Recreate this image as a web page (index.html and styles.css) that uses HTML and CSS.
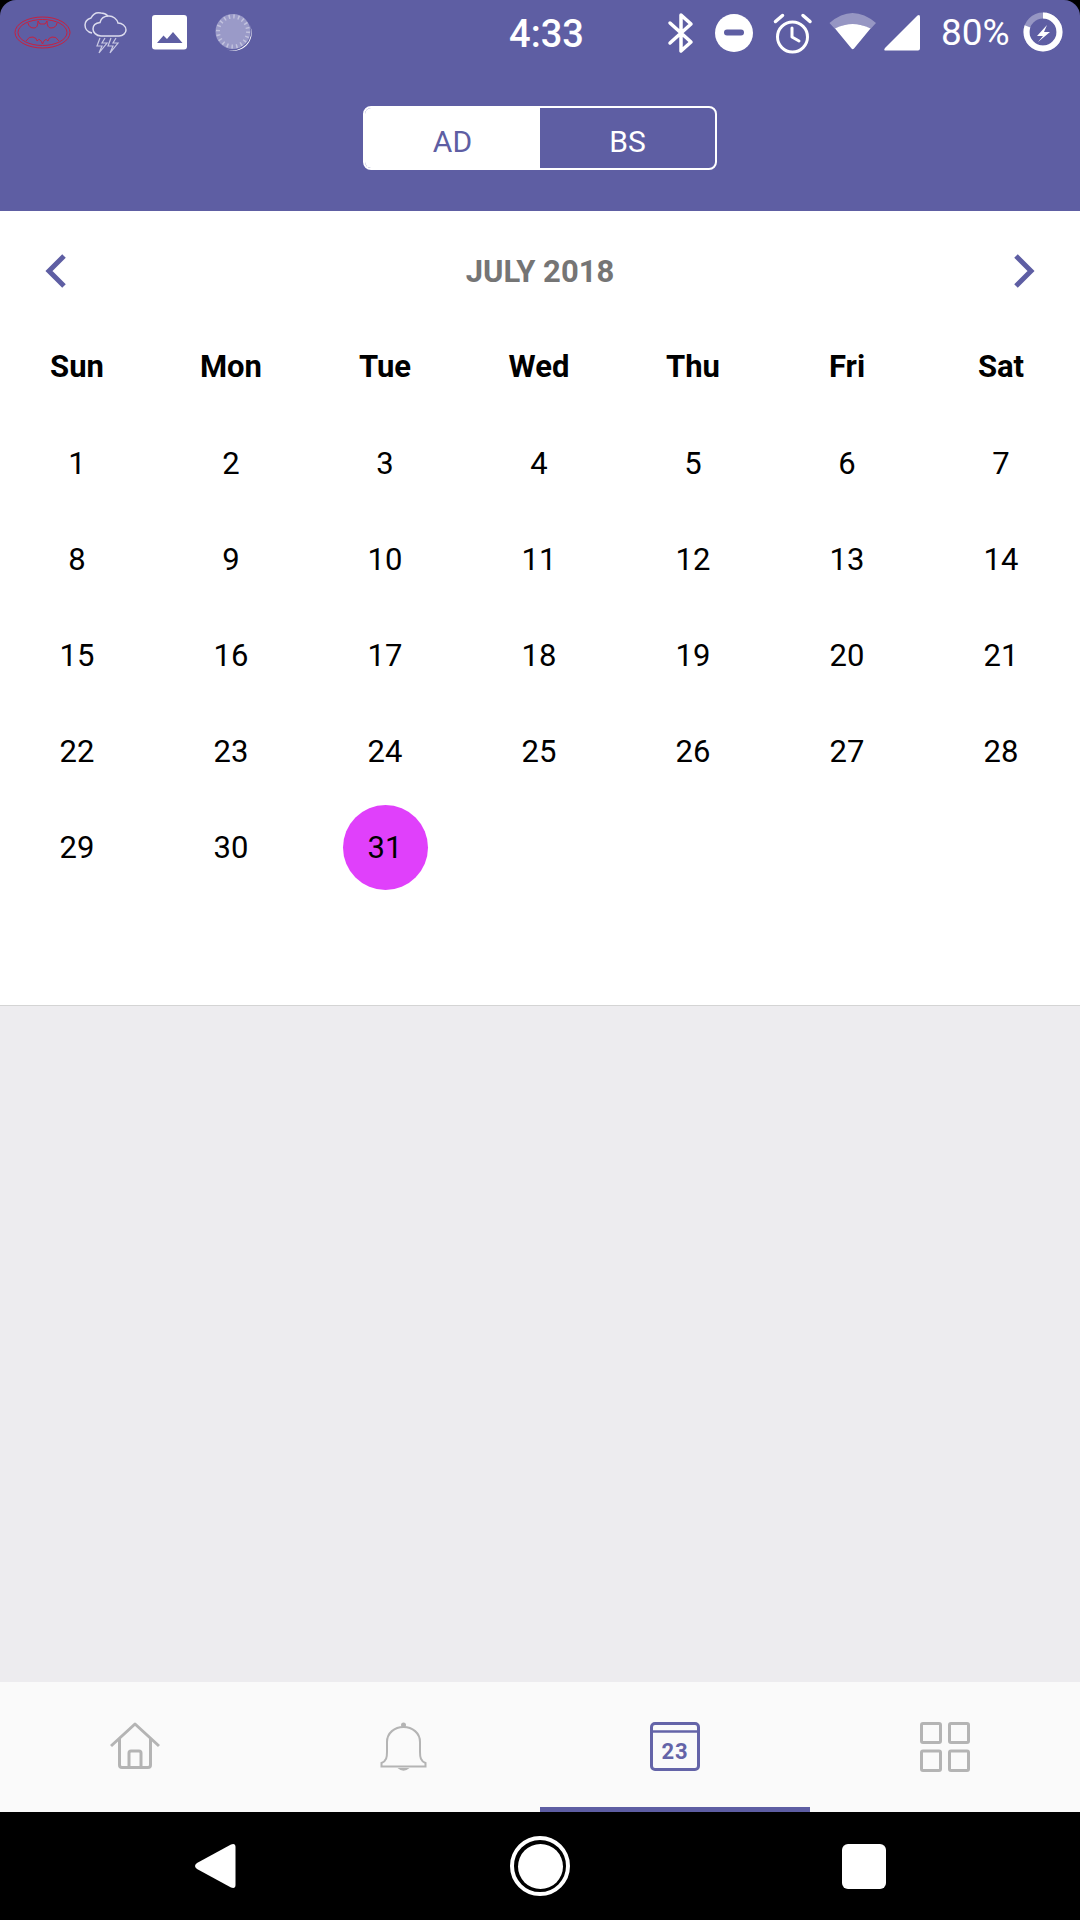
FILE: index.html
```html
<!DOCTYPE html>
<html lang="en">
<head>
    <meta charset="UTF-8">
    <title>Calendar</title>
    <link rel="stylesheet" href="styles.css">
</head>
<body>
<div class="app">
    <div class="header">
        <div class="status">
            <div class="status-left">
                <!-- viewBox values are page pixels, so the icons sit edge to edge -->
                <svg width="64" height="65" viewBox="13 0 64 65" fill="none" stroke="#c8203f" stroke-width="1">
                    <ellipse cx="42.5" cy="32.5" rx="27.5" ry="15.5"/>
                    <ellipse cx="42.5" cy="32.5" rx="24.5" ry="13"/>
                    <path d="M28 23 Q29 28 34 28 Q38 28 38 21 L40 24 H45 L47 21 Q47 28 51 28 Q56 28 57 23"/>
                    <path d="M26 41 Q29 36 33 37 Q37 38 37 41 Q40 37 42.5 44 Q45 37 48 41 Q48 38 52 37 Q56 36 59 41"/>
                </svg>
                <svg width="63" height="65" viewBox="77 0 63 65" fill="none" stroke="#dcdcee" stroke-width="1.5">
                    <path d="M101 36 C96 36 93 32 93 29 C93 25 96 23 100 22.5 C101 18 105 16 109 16 C113 16 117 19 118 23 C122 23 126 26 126 30 C126 33 123 36 119 36 Z"/>
                    <path d="M92 33 C87 32 85 28 85 25 C85 21 88 19 91 18 C93 14 97 12 101 13 C104 13 107 15 108 16"/>
                    <path d="M100 38 L97 46 H102 L99 53 L107 43 H102 L105 38" stroke="#c9c9e4" stroke-width="1.2"/>
                    <path d="M111 38 L108 46 H113 L110 53 L118 43 H113 L116 38" stroke="#c9c9e4" stroke-width="1.2"/>
                </svg>
                <svg width="60" height="65" viewBox="140 0 60 65">
                    <rect x="152" y="15" width="35" height="34.5" rx="3" fill="#fff"/>
                    <path d="M157 43 L163.5 35.5 L167 39 L173 32 L182.5 43 Z" fill="#5e5ea3"/>
                </svg>
                <svg width="68" height="65" viewBox="200 0 68 65">
                    <circle cx="233" cy="31.5" r="17.5" fill="#9a9ac8"/>
                    <circle cx="233" cy="31.5" r="15" fill="none" stroke="#c2c2de" stroke-width="4" stroke-dasharray="1.5 3.2"/>
                    <path d="M250 25 A18.5 18.5 0 0 1 226 49 A18 18 0 0 0 250 25 Z" fill="#fff"/>
                </svg>
            </div>
            <div class="time">4:33</div>
            <div class="status-right">
                <svg width="44" height="65" viewBox="660 0 44 65" fill="none" stroke="#fff" stroke-width="3.5" stroke-linecap="round" stroke-linejoin="round">
                    <path d="M670 23 L691 42 L681 51 V15 L691 24 L670 43"/>
                </svg>
                <svg width="59" height="65" viewBox="704 0 59 65">
                    <circle cx="734" cy="33" r="19" fill="#fff"/>
                    <rect x="724" y="29.5" width="20" height="6" rx="3" fill="#5e5ea3"/>
                </svg>
                <svg width="58" height="65" viewBox="763 0 58 65" fill="none" stroke="#fff" stroke-width="3" stroke-linecap="round" stroke-linejoin="round">
                    <circle cx="792.5" cy="37" r="15"/>
                    <path d="M792 28 V37 L799 41"/>
                    <path d="M775.5 21.5 L782.5 15.5 M803 15.5 L810 21.5" stroke-width="3.5"/>
                </svg>
                <svg width="59" height="65" viewBox="821 0 59 65">
                    <path d="M829.5 23 Q852.5 3 876 23 L870.5 29 Q852.5 19 835 29 Z" fill="#fff" fill-opacity="0.35"/>
                    <path d="M835 28.5 Q852.5 19.5 870.5 28.5 L854 48.5 Q852.7 50 851.5 48.5 Z" fill="#fff"/>
                </svg>
                <svg width="50" height="65" viewBox="880 0 50 65">
                    <path d="M885 50.5 Q883.5 50 885 48 L917.5 15.5 Q920 14 920 17 V48.5 Q920 50.5 918 50.5 Z" fill="#fff"/>
                </svg>
                <span class="battery-text">80%</span>
                <svg width="54" height="65" viewBox="1016 0 54 65">
                    <circle cx="1043" cy="32" r="16.5" fill="none" stroke="#fff" stroke-opacity="0.35" stroke-width="6"/>
                    <circle cx="1043" cy="32" r="16.5" fill="none" stroke="#fff" stroke-width="6" stroke-dasharray="83 104" transform="rotate(-90 1043 32)"/>
                    <path d="M1047 25 L1037 36 H1043 L1038 42 L1050 32 H1044 Z" fill="#fff"/>
                </svg>
            </div>
        </div>
        <div class="toggle">
            <div class="toggle-item active">AD</div>
            <div class="toggle-item">BS</div>
        </div>
    </div>

    <div class="calendar">
        <div class="month-nav">
            <svg width="32" height="36" viewBox="0 0 32 36" fill="none" stroke="#5e5ea3" stroke-width="5">
                <path d="M21 3 L6 18 L21 33"/>
            </svg>
            <div class="month-title">JULY 2018</div>
            <svg width="32" height="36" viewBox="0 0 32 36" fill="none" stroke="#5e5ea3" stroke-width="5">
                <path d="M11 3 L26 18 L11 33"/>
            </svg>
        </div>
        <div class="weekdays">
            <div>Sun</div><div>Mon</div><div>Tue</div><div>Wed</div><div>Thu</div><div>Fri</div><div>Sat</div>
        </div>
        <div class="days">
            <div>1</div><div>2</div><div>3</div><div>4</div><div>5</div><div>6</div><div>7</div>
            <div>8</div><div>9</div><div>10</div><div>11</div><div>12</div><div>13</div><div>14</div>
            <div>15</div><div>16</div><div>17</div><div>18</div><div>19</div><div>20</div><div>21</div>
            <div>22</div><div>23</div><div>24</div><div>25</div><div>26</div><div>27</div><div>28</div>
            <div>29</div><div>30</div><div><span class="today">31</span></div>
        </div>
    </div>

    <div class="content"></div>

    <div class="tabs">
        <div class="tab">
            <svg width="50" height="50" viewBox="0 0 50 50" fill="none" stroke="#b4b4b4" stroke-width="3" stroke-linejoin="round">
                <path d="M1 24 L25 2 L49 24"/>
                <path d="M9.5 16 V43 Q9.5 45.500 12 45.500 H38 Q40.500 45.500 40.500 43 V16"/>
                <path d="M19 45 V31 Q19 29 21 29 H29 Q31 29 31 31 V45"/>
            </svg>
        </div>
        <div class="tab">
            <svg width="50" height="50" viewBox="1.500 0 50 50" fill="none" stroke="#b4b4b4" stroke-width="2">
                <path d="M3 44.500 H47 V41 C42 39 41.500 35 41.500 30 V20 C41.500 11 34 5 25 5 C16 5 8.500 11 8.500 20 V30 C8.500 35 8 39 3 41 Z"/>
                <circle cx="25" cy="3" r="2.500" fill="#b4b4b4" stroke="none"/>
                <path d="M19 46 H31 Q25 51.500 19 46 Z" fill="#b4b4b4" stroke="none"/>
            </svg>
        </div>
        <div class="tab active">
            <svg width="50" height="50" viewBox="0 0 50 50" fill="none" stroke="#6464a8" stroke-width="3">
                <rect x="1.500" y="1.500" width="47" height="46" rx="3.500"/>
                <path d="M1.500 9.500 H48.500" stroke-width="2.500"/>
                <text class="tab-date" x="25" y="36.500" text-anchor="middle">23</text>
            </svg>
        </div>
        <div class="tab">
            <svg width="50" height="50" viewBox="0 0 50 50" fill="none" stroke="#b4b4b4" stroke-width="3">
                <rect x="1.500" y="1.500" width="19" height="19" rx="1.500"/>
                <rect x="29.500" y="1.500" width="19" height="19" rx="1.500"/>
                <rect x="1.500" y="29" width="19" height="19.500" rx="1.500"/>
                <rect x="29.500" y="29" width="19" height="19.500" rx="1.500"/>
            </svg>
        </div>
    </div>

    <div class="navbar">
        <svg width="44" height="46" viewBox="0 0 44 46">
            <path d="M3 20 L37 1.500 Q41.500 0 41.500 4 V42 Q41.500 46 37 44.500 L3 26 Q-1 23 3 20 Z" fill="#fff"/>
        </svg>
        <div class="nav-home"><span></span></div>
        <div class="nav-square"></div>
    </div>
</div>
</body>
</html>
```

FILE: styles.css
```css
* {
    padding: 0;
    margin: 0;
    box-sizing: border-box;
}
body {
    width: 1080px;
    height: 1920px;
    overflow: hidden;
    background: #000;
    font-family: Roboto, "Liberation Sans", sans-serif;
}
.app {
    height: 1920px;
    display: flex;
    flex-direction: column;
}
.header {
    height: 211px;
    background: #5e5ea3;
    border-radius: 16px 16px 0 0;
}
.status {
    height: 65px;
    padding-left: 13px;
    display: grid;
    grid-template-columns: 1fr auto 1fr;
    align-items: center;
}
.status svg {
    display: block;
    flex: none;
}
.status-left {
    display: flex;
}
.status-right {
    display: flex;
    justify-content: flex-end;
    align-items: center;
    padding-right: 10px;
}
.time {
    font-size: 38px;
    font-weight: 500;
    color: #fff;
    position: relative;
    top: 1px;
}
.battery-text {
    width: 86px;
    padding-left: 11px;
    font-size: 37px;
    color: #fff;
    white-space: nowrap;
}
.toggle {
    width: 354px;
    height: 64px;
    margin: 41px auto 0;
    display: flex;
    border: 2px solid #fff;
    border-radius: 8px;
    overflow: hidden;
}
.toggle-item {
    flex: 1;
    padding-top: 7px;
    display: flex;
    align-items: center;
    justify-content: center;
    font-size: 30px;
    color: #fff;
}
.toggle-item.active {
    background: #fff;
    color: #5e5ea3;
}
.calendar {
    height: 795px;
    background: #fff;
    border-bottom: 1px solid #d4d4d4;
}
.month-nav {
    height: 120px;
    padding: 0 43px;
    display: flex;
    align-items: center;
    justify-content: space-between;
}
.month-title {
    font-size: 31px;
    font-weight: 700;
    color: #757575;
}
.weekdays,
.days {
    display: grid;
    grid-template-columns: repeat(7, 154px);
    text-align: center;
    color: #000;
    font-size: 31px;
}
.weekdays {
    height: 70px;
    align-items: center;
    font-weight: 700;
}
.days {
    margin-top: 14px;
    grid-auto-rows: 96px;
    align-items: center;
}
.today {
    width: 85px;
    height: 85px;
    margin: 0 auto;
    display: flex;
    align-items: center;
    justify-content: center;
    background: #e040fb;
    border-radius: 50%;
}
.content {
    flex: 1;
    background: #edecef;
}
.tabs {
    height: 130px;
    display: grid;
    grid-template-columns: repeat(4, 1fr);
    background: #fafafa;
}
.tab {
    padding-top: 40px;
    display: flex;
    justify-content: center;
    border-bottom: 5px solid transparent;
}
.tab.active {
    border-bottom-color: #5e5ea3;
}
.tab-date {
    font-family: Roboto, sans-serif;
    font-size: 22px;
    font-weight: 700;
    letter-spacing: 1px;
    fill: #6464a8;
    stroke: none;
}
.navbar {
    height: 108px;
    padding: 0 54px;
    display: grid;
    grid-template-columns: repeat(3, 1fr);
    align-items: center;
    justify-items: center;
}
.nav-home {
    width: 60px;
    height: 60px;
    display: flex;
    align-items: center;
    justify-content: center;
    border: 4px solid #fff;
    border-radius: 50%;
    background: #000;
}
.nav-home span {
    width: 45px;
    height: 45px;
    background: #fff;
    border-radius: 50%;
}
.nav-square {
    width: 44px;
    height: 45px;
    background: #fff;
    border-radius: 6px;
}
```
